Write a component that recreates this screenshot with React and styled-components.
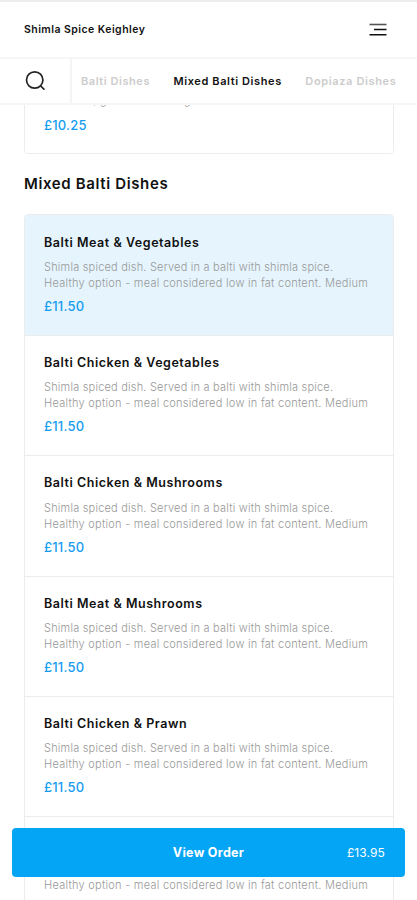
import React from 'react';
import styled, { createGlobalStyle } from 'styled-components';

const categories = [
  { name: 'Balti Dishes', spacing: '0.56px' },
  { name: 'Mixed Balti Dishes', active: true, spacing: '0.6px' },
  { name: 'Dopiaza Dishes', spacing: '0.64px' },
];

const description = [
  { text: 'Shimla spiced dish. Served in a balti with shimla spice.', spacing: '0.2px' },
  { text: 'Healthy option - meal considered low in fat content. Medium', spacing: '0.26px' },
];

const dishes = [
  { name: 'Balti Meat & Vegetables', selected: true },
  { name: 'Balti Chicken & Vegetables' },
  { name: 'Balti Chicken & Mushrooms' },
  { name: 'Balti Meat & Mushrooms' },
  { name: 'Balti Chicken & Prawn' },
  { name: 'Balti Prawn & Mushrooms' },
];

const SearchIcon = () => (
  <svg width="22" height="22" viewBox="0 0 22 22" fill="none" stroke="#222" strokeWidth="1.7">
    <circle cx="9.7" cy="10" r="8.2" />
    <path d="M15.7 16l3.2 3.2" strokeLinecap="round" />
  </svg>
);

const MenuIcon = () => (
  <svg width="18" height="14" viewBox="0 0 18 14" fill="none" strokeWidth="1.6">
    <path d="M0.5 1.5h17" stroke="#555" />
    <path d="M5 6.5h12.5M0.5 11.7h17" stroke="#111" />
  </svg>
);

const DishRow = ({ name, lines, price, selected }) => (
  <Row $selected={selected}>
    <DishName>{name}</DishName>
    <Description>
      {lines.map((line) => (
        <Line key={line.text} $spacing={line.spacing}>
          {line.text}
        </Line>
      ))}
    </Description>
    <Price>{price}</Price>
  </Row>
);

const App = () => (
  <Page>
    <GlobalStyle />
    <Header>
      <RestaurantName>Shimla Spice Keighley</RestaurantName>
      <IconButton aria-label="Menu">
        <MenuIcon />
      </IconButton>
    </Header>

    <CategoryBar>
      <SearchButton aria-label="Search">
        <SearchIcon />
      </SearchButton>
      <Categories>
        {categories.map((item) => (
          <Category key={item.name} $active={item.active} $spacing={item.spacing}>
            {item.name}
          </Category>
        ))}
      </Categories>
    </CategoryBar>

    <Menu>
      <PreviousCard>
        <DishRow
          name="Balti Special"
          lines={[
            { text: 'Served in a balti dish. Cooked with onion,' },
            { text: 'tomatoes, garlic and herb garnish', spacing: '0.26px' },
          ]}
          price="£10.25"
        />
      </PreviousCard>
      <SectionTitle>Mixed Balti Dishes</SectionTitle>
      <Card>
        {dishes.map((dish) => (
          <DishRow
            key={dish.name}
            name={dish.name}
            lines={description}
            price="£11.50"
            selected={dish.selected}
          />
        ))}
      </Card>
    </Menu>

    <OrderButton>
      <OrderLabel>View Order</OrderLabel>
      <OrderTotal>£13.95</OrderTotal>
    </OrderButton>
  </Page>
);

export default App;

const GlobalStyle = createGlobalStyle`
  * {
    box-sizing: border-box;
  }

  body {
    margin: 0;
    background: #fff;
    font-family: Inter, 'Liberation Sans', sans-serif;
  }

  button {
    padding: 0;
    border: 0;
    background: none;
    font-family: inherit;
  }
`;

const Page = styled.div`
  position: relative;
  display: flex;
  flex-direction: column;
  height: 900px;
  overflow: hidden;
`;

const Header = styled.header`
  display: flex;
  flex-shrink: 0;
  align-items: center;
  justify-content: space-between;
  height: 59px;
  padding: 0 30px 0 24px;
  border-top: 2px solid #ededed;
  border-bottom: 2px solid #f6f6f6;
`;

const RestaurantName = styled.div`
  color: #111;
  font-size: 10.5px;
  font-weight: 600;
  letter-spacing: 0.45px;
`;

const IconButton = styled.button`
  display: flex;
`;

const CategoryBar = styled.nav`
  display: flex;
  flex-shrink: 0;
  height: 46px;
  border-bottom: 2px solid #f6f6f6;
`;

const SearchButton = styled.button`
  display: flex;
  flex-shrink: 0;
  align-items: center;
  width: 72px;
  padding-left: 25px;
  border-right: 2px solid #f4f4f4;
`;

const Categories = styled.div`
  display: flex;
  flex: 1;
  align-items: center;
  gap: 23.5px;
  padding-left: 9px;
  overflow: hidden;
`;

const Category = styled.span`
  color: ${(props) => (props.$active ? '#111' : '#ccc')};
  font-size: 11px;
  font-weight: 600;
  letter-spacing: ${(props) => props.$spacing};
  white-space: nowrap;
`;

const Menu = styled.main`
  flex: 1;
  min-height: 0;
  padding: 0 23px 0 24px;
  overflow: hidden;
`;

const Card = styled.section`
  border: 1px solid #ececec;
  border-radius: 4px;
  overflow: hidden;
`;

const Row = styled.article`
  height: 120.4px;
  padding: 18.3px 19px 0;
  background: ${(props) => (props.$selected ? '#e5f4fd' : '#fff')};

  &:not(:last-child) {
    border-bottom: 1px solid #ececec;
  }
`;

const DishName = styled.h3`
  margin: 0;
  color: #111;
  font-size: 12.5px;
  font-weight: 600;
  letter-spacing: 0.54px;
  line-height: 18px;
`;

const Description = styled.div`
  margin-top: 7.2px;
  color: #999;
  font-size: 11px;
  font-weight: 300;
  line-height: 16px;
`;

const Line = styled.div`
  letter-spacing: ${(props) => props.$spacing || 'normal'};
  white-space: nowrap;
`;

const Price = styled.div`
  margin-top: 6px;
  color: #159cf0;
  font-size: 13px;
  font-weight: 500;
  letter-spacing: 0.2px;
  line-height: 18px;
`;

/* Scrolled so that only the end of its last dish shows below the bar. */
const PreviousCard = styled(Card)`
  margin-top: -73px;

  ${Row} {
    padding-top: 17.8px;
  }

  ${Price} {
    margin-top: 8px;
  }
`;

const SectionTitle = styled.h2`
  height: 60px;
  margin: 0;
  color: #111;
  font-size: 15px;
  font-weight: 600;
  letter-spacing: 0.63px;
  line-height: 59px;
`;

const OrderButton = styled.button`
  position: absolute;
  right: 12px;
  bottom: 23px;
  left: 12px;
  display: grid;
  grid-template-columns: 1fr auto 1fr;
  align-items: center;
  height: 49px;
  padding: 0 20px;
  border-radius: 4px;
  background: #05a5f5;
  color: #fff;
`;

const OrderLabel = styled.span`
  grid-column: 2;
  font-size: 12.5px;
  font-weight: 700;
  letter-spacing: 0.3px;
`;

const OrderTotal = styled.span`
  font-size: 12px;
  font-weight: 400;
  letter-spacing: 0.1px;
  text-align: right;
`;
